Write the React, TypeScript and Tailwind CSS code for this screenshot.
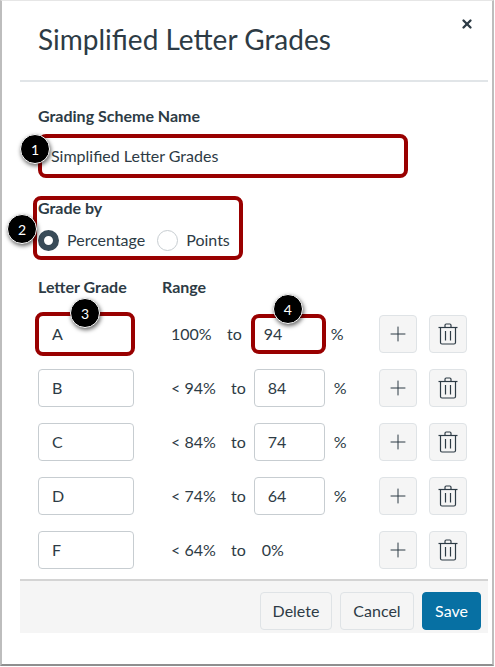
import { Plus, X } from "lucide-react";

const rows = [
  { letter: "A", from: "100%", to: "94" },
  { letter: "B", from: "< 94%", to: "84" },
  { letter: "C", from: "< 84%", to: "74" },
  { letter: "D", from: "< 74%", to: "64" },
  { letter: "F", from: "< 64%", to: "" },
];

const Badge = ({ n, className }: { n: number; className: string }) => (
  <div
    className={`absolute z-10 flex h-[30px] w-[30px] items-center justify-center rounded-full border border-white bg-black text-[14px] text-white shadow-[1px_2px_4px_rgba(0,0,0,0.6)] ${className}`}
  >
    {n}
  </div>
);

const Highlight = ({ className }: { className: string }) => (
  <div className={`pointer-events-none absolute border-[4px] border-[#990000] ${className}`} />
);

const TrashIcon = () => (
  <svg width="20" height="22" viewBox="0 0 20 22" fill="none" stroke="#2d3b45" strokeWidth="1.2">
    <path d="M0.5 4.5H19.5" />
    <path d="M7 4.5V2.2C7 1.5 7.5 1 8.2 1H11.8C12.5 1 13 1.5 13 2.2V4.5" />
    <path d="M2.5 4.5V19.5C2.5 20.4 3.1 21 4 21H16C16.9 21 17.5 20.4 17.5 19.5V4.5" />
    <path d="M7.5 8V17.5M12.5 8V17.5" />
  </svg>
);

const IconButton = ({ children }: { children: React.ReactNode }) => (
  <div className="flex h-[38px] w-[38px] items-center justify-center rounded-[4px] border border-[#dfe3e6] bg-[#f5f5f5]">
    {children}
  </div>
);

const FooterButton = ({ label, className }: { label: string; className: string }) => (
  <div className={`flex h-[38px] items-center justify-center rounded-[4px] border text-[16px] ${className}`}>
    {label}
  </div>
);

export default function App() {
  return (
    <div className="h-[667px] w-[495px] bg-white font-['Lato',sans-serif] text-[#2d3b45]">
      <div className="relative h-[666px] w-[494px] border-x-2 border-b-2 border-t border-x-[#bdbdbd] border-b-[#8f8f8f] border-t-[#e6e6e6] pl-[18px] pr-[4px]">
        <div className="flex h-[81px] items-start border-b-2 border-[#e1e5e8] pl-[18px] pr-[14px]">
          <h1 className="mt-[19px] flex-1 text-[28px] font-normal leading-[38px]">Simplified Letter Grades</h1>
          <X className="mt-[16px]" size={14} strokeWidth={4} color="#2d3b45" />
        </div>

        <div className="pl-[18px]">
          <div className="mt-[24px] text-[16px] font-bold leading-[20px]">Grading Scheme Name</div>
          <div className="relative mt-[8px] flex h-[44px] w-[370px] items-center pl-[13px] text-[16px]">
            <Highlight className="inset-0 rounded-[8px]" />
            <Badge n={1} className="left-[-18px] top-0" />
            Simplified Letter Grades
          </div>

          <div className="relative mt-[18px] h-[64px] w-[205px]">
            <Highlight className="bottom-0 left-[-5px] right-0 top-0 rounded-[8px]" />
            <Badge n={2} className="left-[-31px] top-[18px]" />
            <div className="pt-[2px] text-[16px] font-bold leading-[20px]">Grade by</div>
            <div className="mt-[10px] flex items-center text-[16px]">
              <div className="h-[21px] w-[21px] rounded-full border-[6px] border-[#394b58] bg-white" />
              <span className="ml-[8px]">Percentage</span>
              <div className="ml-[12px] h-[21px] w-[21px] rounded-full border border-[#c7cdd1] bg-white" />
              <span className="ml-[8px]">Points</span>
            </div>
          </div>

          <div className="mt-[17px] flex text-[16px] font-bold leading-[20px]">
            <div className="w-[124px]">Letter Grade</div>
            <div>Range</div>
          </div>

          <div className="mt-[18px] flex flex-col gap-[16px]">
            {rows.map((row, i) => (
              <div key={row.letter} className="flex h-[38px] items-center text-[16px]">
                <div className="relative flex h-[38px] w-[96px] items-center rounded-[4px] border border-[#c7cdd1] pl-[13px]">
                  {i === 0 && <Highlight className="inset-y-[-4px] left-[-4px] right-[-2px] rounded-[8px]" />}
                  {i === 0 && <Badge n={3} className="left-[31px] top-[-18px]" />}
                  {row.letter}
                </div>
                <div className={i === 0 ? "ml-[37px] w-[56px]" : "ml-[37px] w-[60px]"}>{row.from}</div>
                <div>to</div>
                {row.to ? (
                  <>
                    <div
                      className={
                        i === 0
                          ? "relative ml-[9px] flex h-[38px] w-[75px] items-center rounded-[4px] pl-[13px]"
                          : "relative ml-[8px] flex h-[38px] w-[71px] items-center rounded-[4px] border border-[#c7cdd1] pl-[13px]"
                      }
                    >
                      {i === 0 && <Highlight className="inset-x-0 inset-y-[-1px] rounded-[8px]" />}
                      {i === 0 && <Badge n={4} className="left-[22px] top-[-21px]" />}
                      {row.to}
                    </div>
                    <span className={i === 0 ? "ml-[5px] w-[48px]" : "ml-[9px] w-[45px]"}>%</span>
                  </>
                ) : (
                  <span className="ml-[16px] w-[117px]">0%</span>
                )}
                <IconButton>
                  <Plus size={24} strokeWidth={1} color="#2d3b45" />
                </IconButton>
                <div className="ml-[12px]">
                  <IconButton>
                    <TrashIcon />
                  </IconButton>
                </div>
              </div>
            ))}
          </div>
        </div>

        <div className="mt-[10px] flex h-[54px] items-start justify-end gap-[8px] border-t-2 border-[#d4d4d4] bg-[#f5f5f5] pr-[7px] pt-[11px]">
          <FooterButton label="Delete" className="w-[72px] border-[#dfe3e6] bg-[#f5f5f5]" />
          <FooterButton label="Cancel" className="w-[74px] border-[#dfe3e6] bg-[#f5f5f5]" />
          <FooterButton label="Save" className="w-[59px] border-[#0770a3] bg-[#0770a3] text-white" />
        </div>
      </div>
    </div>
  );
}
